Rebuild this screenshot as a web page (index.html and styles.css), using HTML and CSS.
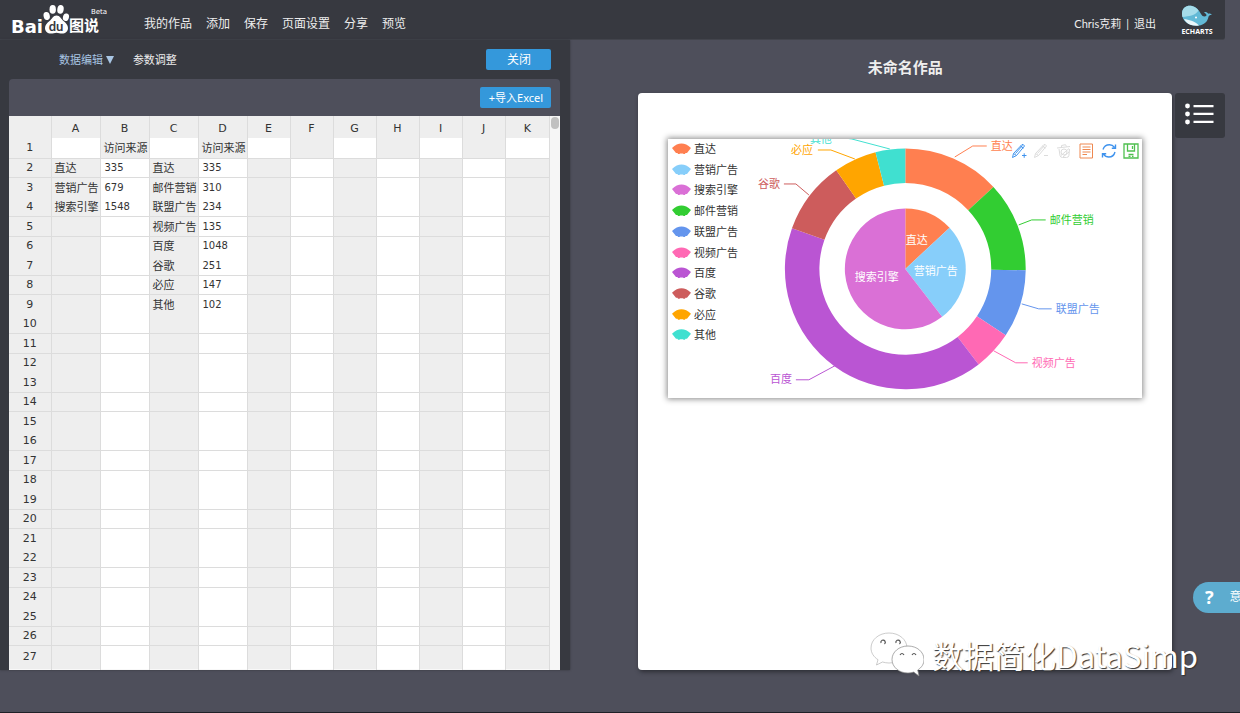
FILE: index.html
```html
<!DOCTYPE html>
<html lang="zh-CN">
<head>
<meta charset="utf-8">
<title>百度图说</title>
<link rel="stylesheet" href="styles.css">
</head>
<body>
<header class="topbar">
  <svg class="logo" viewBox="0 1 100 38" role="img" aria-label="Baidu图说 Beta">
    <text class="logo-bai" x="1" y="33">Bai</text>
    <g fill="#fff">
      <ellipse cx="36.7" cy="16" rx="3.1" ry="4" transform="rotate(-14 36.7 16)"/>
      <ellipse cx="42.7" cy="9.4" rx="3.2" ry="4.4"/>
      <ellipse cx="50.5" cy="9.4" rx="3.2" ry="4.4" transform="rotate(8 50.5 9.4)"/>
      <ellipse cx="56" cy="17.2" rx="3" ry="3.8" transform="rotate(14 56 17)"/>
      <path d="M46.500 15.500c3.500 0 4.500 3.500 7 5.500 2.500 2 4.500 4 4.500 7 0 3.500-2.500 5.500-6 5.500-2 0-3.500-.8-5.500-.8s-3.500.8-5.500.8c-3.500 0-6-2-6-5.500 0-3 2-5 4.500-7 2.500-2 3.500-5.500 7-5.500z"/>
    </g>
    <text class="logo-du" x="46" y="31" text-anchor="middle">du</text>
    <text class="logo-cn" x="59" y="31">图说</text>
    <text class="logo-beta" x="81" y="14">Beta</text>
  </svg>
  <nav class="mainnav">
    <a href="#">我的作品</a><a href="#">添加</a><a href="#">保存</a><a href="#">页面设置</a><a href="#">分享</a><a href="#">预览</a>
  </nav>
  <div class="account"><a href="#">Chris克莉</a><span>|</span><a href="#">退出</a></div>
  <a class="echarts" href="#" aria-label="ECharts">
    <svg viewBox="0 2 34 34">
      <path d="M2 13C2 6.500 7 4 12 5c4 .8 7 4 9 8 1.500 2.800 4 3.200 5.500 1.500.3-1.500-1.500-2-2.500-3.500 2-.3 3.500.3 4.200 1.700 1.300-.7 2.800-.2 3.800 1.300-2-.2-3 .3-3.500 1.800C27.500 21 24 24 19 24.500 9 25.500 2 20 2 13z" fill="#62b9d6"/>
      <path d="M2 12C2.500 6.500 7 4 12 5c3 .7 5 2.200 6.500 4.500C15 15 9 15 2.500 16 2 14.500 2 13 2 12z" fill="#a5dcea"/>
      <path d="M4 18c5 1 10 1.500 15 6.500C12 25.500 6.500 23 4 18z" fill="#e9f6fa"/>
      <circle cx="16" cy="16.500" r="1" fill="#fff"/>
      <text class="echarts-name" x="17" y="33" text-anchor="middle">ECHARTS</text>
    </svg>
  </a>
</header>

<main class="workspace">
  <section class="panel">
    <div class="tabs">
      <button class="tab active" type="button">数据编辑 <svg viewBox="0 0 8 8"><path d="M0 0h8L4 8z" fill="#a9c6e4"/></svg></button>
      <button class="tab" type="button">参数调整</button>
      <button class="btn close" type="button">关闭</button>
    </div>
    <div class="sheet">
      <div class="sheetbar"><button class="btn import" type="button">+导入Excel</button></div>
      <div class="gridwrap">
        <table class="grid">
          <colgroup><col class="c-idx"><col class="c-wide"><col class="c-wide"><col class="c-wide"><col class="c-wide"><col class="c-std"><col class="c-std"><col class="c-std"><col class="c-std"><col class="c-std"><col class="c-std"><col></colgroup>
          <thead><tr><th></th><th>A</th><th>B</th><th>C</th><th>D</th><th>E</th><th>F</th><th>G</th><th>H</th><th>I</th><th>J</th><th>K</th></tr></thead>
          <tbody id="rows"></tbody>
        </table>
        <div class="scroll"><div class="thumb"></div></div>
      </div>
    </div>
  </section>

  <section class="stage">
    <h1 class="title">未命名作品</h1>
    <article class="paper">
      <div class="card">
        <svg class="chart" id="chart" viewBox="0 0 474 259"></svg>
        <div class="tools">
          <button type="button" aria-label="辅助线"><svg viewBox="0 0 16 16" fill="none" stroke="#3f93ee"><path d="M1.500 14.500l1-4L11 1.500q1.500-.5 2.500 1.500L5.500 12.500zM2.500 10.500l3 2M4.500 10.500l7-8M9.500 3l3 2.200M11 12.500h4.500M13.200 10.300v4.500"/></svg></button>
          <button type="button" aria-label="删除辅助线"><svg viewBox="0 0 16 16" fill="none" stroke="#dcdcdc"><path d="M1.500 14.500l1-4L11 1.500q1.500-.5 2.500 1.500L5.500 12.500zM2.500 10.500l3 2M4.500 10.500l7-8M9.500 3l3 2.200M11 12.500h4"/></svg></button>
          <button type="button" aria-label="清空辅助线"><svg viewBox="0 0 16 16" fill="none" stroke="#dcdcdc"><path d="M1 5l13-1.500M5.500 4V2.500l4-.8 1 1.800M3 6l1 6.500q.5 2 2.500 2h4q2 0 2.400-2L13.500 6M5 12.500l8-7M7 14l6-5"/><circle cx="8" cy="9" r="3"/></svg></button>
          <button type="button" aria-label="数据视图"><svg viewBox="0 0 16 16" fill="none" stroke="#ee8850"><path d="M2 1h12.500v14H2zM4.500 4h8M4.500 6.500h8M4.500 9h8M4.500 11.500h4.500"/></svg></button>
          <button type="button" aria-label="还原"><svg viewBox="0 0 16 16" fill="none" stroke="#3f93ee" stroke-width="1.400"><path d="M2 6.500C3 3.500 5.500 1.800 8.500 1.800c2 0 3.800 1 5 2.600M14 9c-.8 3-3.200 5-6.200 5-2 0-4-1-5.200-2.700M14.500 1.500v3.700h-3.700M1.500 14.500v-3.800h3.700"/></svg></button>
          <button type="button" aria-label="保存为图片"><svg viewBox="0 0 16 16" fill="none" stroke="#4fc04f" stroke-width="1.300"><path d="M1 1h14v14H1zM4.500 1v7h7V1M9.500 3v3M5.500 11.500h5M5.500 13.300h2M9 13.300h1.500"/></svg></button>
        </div>
      </div>
    </article>
    <button class="menu" type="button" aria-label="目录">
      <svg viewBox="0 0 30 22" fill="#fff"><circle cx="2.500" cy="3" r="2.400"/><circle cx="2.500" cy="11" r="2.400"/><circle cx="2.500" cy="19" r="2.400"/><path d="M8.500 2h20v2.300h-20zM8.500 9.800h20v2.300h-20zM8.500 17.700h20V20h-20z"/></svg>
    </button>
  </section>
</main>

<button class="feedback" type="button"><b>?</b><span>意</span></button>
<div class="watermark">
  <svg viewBox="0 0 54 46" fill="#fff">
    <path d="M19 1C9 1 1 7.500 1 16c0 5 2.800 9 7 11.700L6.500 33l6-3c2 .6 4.300 1 6.500 1 10 0 18-6.500 18-15S29 1 19 1z" stroke="#aaa" stroke-width=".6"/>
    <path d="M38 14c-9 0-16 6-16 13.500S29 41 38 41c2 0 4-.3 5.700-.9L49 44l-1.300-6c4-2.500 6.300-6 6.300-10.500C54 20 47 14 38 14z" stroke="#888" stroke-width=".7"/>
    <g fill="none" stroke="#555" stroke-width="1.200"><path d="M11 11a2.200 2.200 0 1 1 3.500 1M26 11a2.200 2.200 0 1 1 3.500 1M30 23q2-3 4 0M42 23q2-3 4 0"/></g>
  </svg>
  <span>数据简化DataSimp</span>
</div>
<script src="app.js"></script>
</body>
</html>
```

FILE: styles.css
```css
* { box-sizing: border-box; }
body {
  margin: 0;
  min-height: 100vh;
  display: flex;
  flex-direction: column;
  position: relative;
  overflow: hidden;
  background: #4e4f5b;
  border-bottom: 2px solid #1f2027;
  color: #eee;
  font: 11px/16px "Noto Sans", "Noto Sans CJK SC", sans-serif;
}
a { color: inherit; text-decoration: none; }
button { font: inherit; color: inherit; border: 0; padding: 0; background: none; }

.topbar {
  display: flex;
  align-items: center;
  height: 40px;
  margin-right: 15px;
  padding: 0 11px 0 10px;
  background: #373940;
  border-bottom: 1px solid #42444c;
  border-radius: 0 0 3px 0;
}
.logo { width: 100px; height: 38px; margin-right: 34px; }
.logo text { fill: #fff; }
.logo-bai { font: bold 18px "DejaVu Sans", sans-serif; }
.logo .logo-du { font: bold 13px Lato, sans-serif; fill: #373940; }
.logo-cn { font: bold 15px "Noto Sans CJK SC", sans-serif; }
.logo-beta { font: 7px "DejaVu Sans", sans-serif; }
.mainnav { display: flex; gap: 14px; font-size: 12px; padding-top: 8px; }
.account { display: flex; gap: 5px; margin-left: auto; padding-top: 8px; font-family: Lato, "Noto Sans CJK SC", sans-serif; }
.echarts { width: 34px; height: 34px; margin-left: 24px; }
.echarts svg { display: block; width: 100%; }
.echarts-name { font: bold 7px "Open Sans", sans-serif; fill: #fff; }

.workspace { flex: 1; display: flex; padding-bottom: 42px; }
.panel {
  flex: 0 0 46%;
  display: flex;
  flex-direction: column;
  padding: 0 10px 0 9px;
  background: #373940;
  box-shadow: 0 0 2px #33353c;
}
.tabs { display: flex; align-items: center; height: 39px; padding: 0 9px 0 50px; }
.tab { margin-right: 19px; }
.tab svg { width: 8px; height: 8px; }
.tab.active { color: #a9c6e4; }
.btn { height: 21px; border-radius: 2px; background: #3498db; color: #fff; }
.close { width: 65px; margin: 0 0 0 auto; font-size: 12px; }
.import { width: 71px; }
.sheet { flex: 1; display: flex; flex-direction: column; border-radius: 4px 4px 0 0; overflow: hidden; background: #4e4f5b; }
.sheetbar { display: flex; justify-content: flex-end; align-items: center; height: 37px; padding: 0 9px; }
.gridwrap { flex: 1; display: flex; background: #f8f8f8; overflow: hidden; }
.grid { flex: 1; table-layout: fixed; border-collapse: collapse; color: #333; line-height: 16px; }
.c-idx { width: 42px; }
.c-wide { width: 49px; }
.c-std { width: 43px; }
.grid th, .grid td { padding: 1px 0 0 3px; border-right: 1px solid #dcdcdc; text-align: left; white-space: nowrap; font-weight: 400; }
.grid th { padding: 1px 0 0; text-align: center; background: #eee; font: 11px/16px "DejaVu Sans", sans-serif; }
.grid thead tr { height: 22px; }
.grid thead th { padding-top: 3px; }
.grid tbody tr { height: 20px; border-bottom: 1px solid #dcdcdc; }
.grid tbody tr:nth-child(even) { height: 19px; }
.grid tbody tr:nth-child(3n) { border-bottom-color: transparent; }
.grid tbody tr:last-child { height: 24px; vertical-align: top; }
.grid tbody tr:last-child th { padding-top: 3px; }
.grid td:nth-child(even) { background: #eee; }
.grid td:nth-child(odd) { background: #fff; }
.grid tbody tr:first-child td:nth-child(even) { background: #fff; }
.grid tbody tr:first-child td:nth-child(odd) { background: #eee; }
.grid .num { font: 10px/16px "DejaVu Sans", sans-serif; padding-left: 4px; }
.scroll { width: 10px; padding: 1px; background: #f6f6f6; }
.thumb { height: 12px; border-radius: 4px; background: #c1c1c1; }

.stage { flex: 1; display: grid; grid-template-columns: 68px 1fr 68px; grid-template-rows: 53px 1fr; }
.title { grid-column: 1 / 4; margin: 0; text-align: center; font-size: 15px; line-height: 54px; font-weight: 700; }
.paper {
  grid-column: 2;
  padding: 46px 30px;
  background: #fff;
  border-radius: 4px;
  box-shadow: 1px 2px 4px #2d2e35;
}
.card { position: relative; box-shadow: 0 0 6px 1px #888; }
.chart { display: block; width: 100%; overflow: hidden; font-size: 11px; }
.chart text { dominant-baseline: central; }
.tools { position: absolute; top: 4px; right: 3px; width: 128px; display: flex; justify-content: space-between; }
.tools svg { display: block; width: 16px; height: 16px; }
.menu { width: 50px; height: 45px; margin-left: 3px; padding-bottom: 3px; border-radius: 3px; background: #373940; }
.menu svg { display: block; width: 30px; margin: 0 auto; }

.feedback {
  position: absolute;
  right: 0;
  bottom: 99px;
  display: flex;
  align-items: center;
  gap: 16px;
  width: 47px;
  height: 31px;
  padding-left: 12px;
  overflow: hidden;
  border-radius: 16px 0 0 16px;
  background: #5daccf;
  color: #fff;
}
.feedback b { font-size: 18px; }
.feedback span { flex: none; font-size: 12px; }
.watermark {
  position: absolute;
  right: 42px;
  bottom: 34px;
  display: flex;
  align-items: center;
  gap: 8px;
  color: #fff;
  font: 31px/46px "Noto Sans CJK SC", sans-serif;
  text-shadow: 1px 1px 1px #333;
}
.watermark svg { width: 54px; height: 46px; }
```

FILE: app.js
```js
const cells = {
  1: ['', '访问来源', '', '访问来源'],
  2: ['直达', '335', '直达', '335'],
  3: ['营销广告', '679', '邮件营销', '310'],
  4: ['搜索引擎', '1548', '联盟广告', '234'],
  5: ['', '', '视频广告', '135'],
  6: ['', '', '百度', '1048'],
  7: ['', '', '谷歌', '251'],
  8: ['', '', '必应', '147'],
  9: ['', '', '其他', '102']
};
let rows = '';
for (let r = 1; r <= 27; r++) {
  rows += `<tr><th>${r}</th>`;
  for (let c = 0; c < 11; c++) {
    const v = (cells[r] || [])[c] || '';
    rows += `<td${/^\d+$/.test(v) ? ' class="num"' : ''}>${v}</td>`;
  }
  rows += '</tr>';
}
document.getElementById('rows').innerHTML = rows;

const colors = {
  '直达': '#ff7f50', '营销广告': '#87cefa', '搜索引擎': '#da70d6', '邮件营销': '#32cd32',
  '联盟广告': '#6495ed', '视频广告': '#ff69b4', '百度': '#ba55d3', '谷歌': '#cd5c5c',
  '必应': '#ffa500', '其他': '#40e0d0'
};
const inner = [['直达', 335, 249, 101], ['营销广告', 679, 268, 132], ['搜索引擎', 1548, 209, 138]];
const outer = [
  ['直达', 335, '287,18 305,7 319,7', 323, 6, 'start'],
  ['邮件营销', 310, '351,86 364,81 378,81', 382, 81, 'start'],
  ['联盟广告', 234, '354,165 371,170 384,170', 388, 170, 'start'],
  ['视频广告', 135, '326,212 348,224 360,224', 364, 224, 'start'],
  ['百度', 1048, '167,227 141,241 128,241', 124, 240, 'end'],
  ['谷歌', 251, '141,56 128,45 116,45', 112, 45, 'end'],
  ['必应', 147, '187,20 163,11 150,11', 145, 11, 'end'],
  ['其他', 102, '222,10 184,0 170,-2', 164, -1, 'end']
];
const cx = 237.5, cy = 130;
const pt = (r, a) => `${(cx + r * Math.sin(a)).toFixed(2)} ${(cy - r * Math.cos(a)).toFixed(2)}`;
function ring(data, r0, r1) {
  const total = data.reduce((s, d) => s + d[1], 0);
  let a = 0, out = '';
  for (const d of data) {
    const b = a + d[1] / total * Math.PI * 2;
    const big = b - a > Math.PI ? 1 : 0;
    out += `<path fill="${colors[d[0]]}" d="M${pt(r1, a)}A${r1} ${r1} 0 ${big} 1 ${pt(r1, b)}L${pt(r0, b)}A${r0} ${r0} 0 ${big} 0 ${pt(r0, a)}Z"/>`;
    a = b;
  }
  return out;
}
let svg = ring(outer, 86, 120.5) + ring(inner, 0, 60.5);
for (const [name, , x, y] of inner) svg += `<text x="${x}" y="${y}" fill="#fff" text-anchor="middle">${name}</text>`;
for (const [name, , line, x, y, anchor] of outer) {
  svg += `<polyline points="${line}" fill="none" stroke="${colors[name]}"/><text x="${x}" y="${y}" fill="${colors[name]}" text-anchor="${anchor}">${name}</text>`;
}
Object.keys(colors).forEach((name, i) => {
  const y = 10 + Math.round(i * 20.7);
  svg += `<path transform="translate(4 ${y - 6})" fill="${colors[name]}" d="M0 5Q9.500-4 19 5L15 10H13.500L13 11H11.500L11 10.500H8L7.500 11H6L5.500 10H4Z"/><text x="26" y="${y}" fill="#333">${name}</text>`;
});
document.getElementById('chart').innerHTML = svg;
```
